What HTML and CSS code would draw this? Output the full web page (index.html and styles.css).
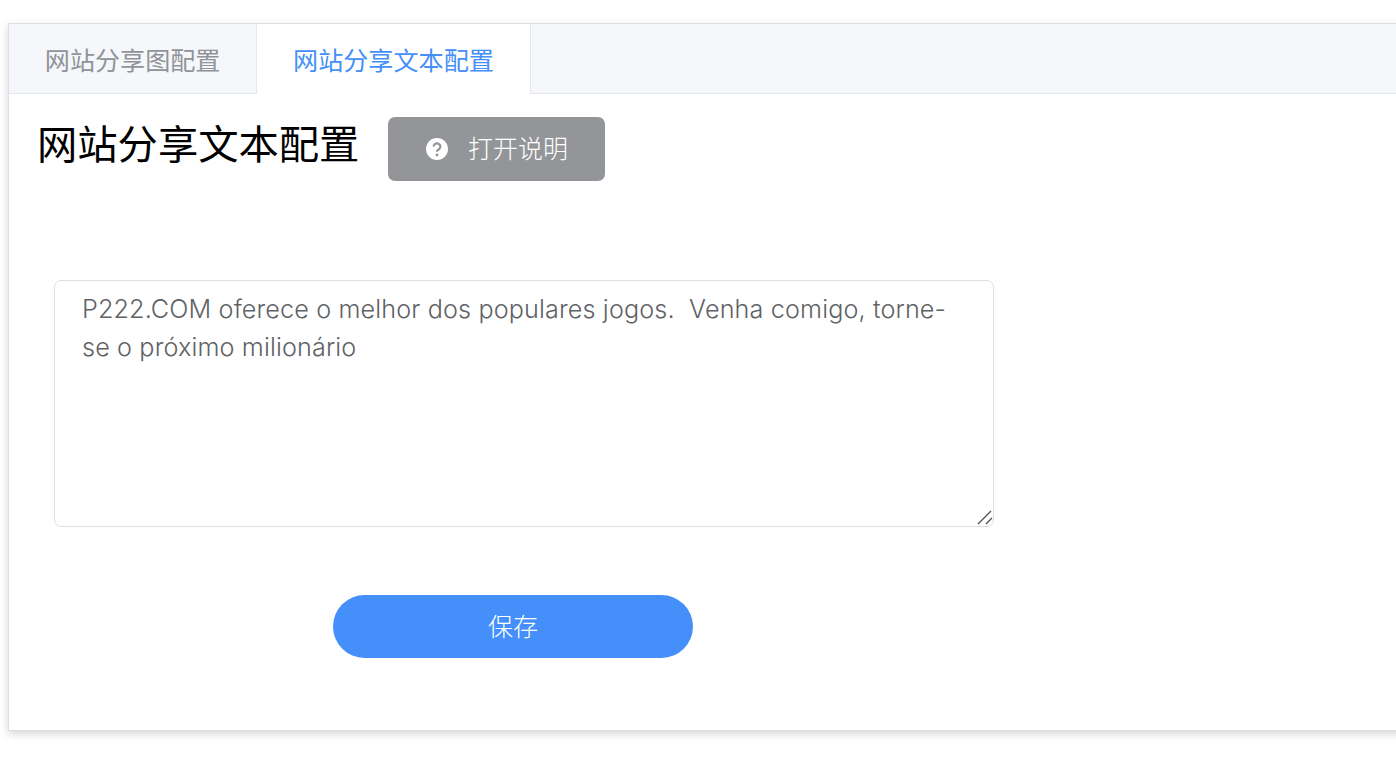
FILE: index.html
```html
<!DOCTYPE html>
<html>
<head>
    <title>网站分享配置</title>
    <link rel="stylesheet" href="styles.css">
</head>
<body>
    <div class="card">
        <div class="tabs">
            <div class="tab">网站分享图配置</div>
            <div class="tab active">网站分享文本配置</div>
        </div>

        <div class="heading">
            <h2>网站分享文本配置</h2>
            <button class="help-button">
                <svg class="help-icon" viewBox="0 0 22 22" width="22" height="22">
                    <circle cx="11" cy="11" r="11" fill="#fff"></circle>
                    <path d="M7.6 8.6a3.4 3.2 0 1 1 5.5 2.5c-1.2.9-2.1 1.3-2.1 2.7" fill="none" stroke="#939598" stroke-width="2.2"></path>
                    <circle cx="11" cy="17" r="1.4" fill="#939598"></circle>
                </svg>
                <span>打开说明</span>
            </button>
        </div>

        <div class="form">
            <div class="text-wrap">
                <textarea class="share-text" spellcheck="false">P222.COM oferece o melhor dos populares jogos.  Venha comigo, torne-se o próximo milionário</textarea>
                <svg class="grip" viewBox="0 0 16 16" width="16" height="16">
                    <path d="M1 14L14 1M9 14L15 8" stroke="#555" stroke-width="1.4" fill="none"></path>
                </svg>
            </div>
            <button class="save-button">保存</button>
        </div>
    </div>
</body>
</html>
```

FILE: styles.css
```css
html, body {
    overflow: hidden;
}

body {
    margin: 0;
    height: 772px;
    background-color: #fff;
    font-family: Inter, "Noto Sans CJK SC", sans-serif;
}

.card {
    box-sizing: border-box;
    height: 708px;
    margin: 23px -20px 0 8px;
    background-color: #fff;
    border: 1px solid #dcdfe6;
    box-shadow: 0 3px 8px rgba(0, 0, 0, 0.16);
}

.tabs {
    box-sizing: border-box;
    display: flex;
    height: 70px;
    background-color: #f5f7fa;
    border-bottom: 1px solid #e4e7ed;
}

.tab {
    padding: 0 35.8px;
    line-height: 74px;
    height: 69px;
    font-size: 25.1px;
    color: #909399;
    border-right: 1px solid #e4e7ed;
}

.tab.active {
    height: 70px;
    color: #448ff9;
    background-color: #fff;
}

.heading {
    display: flex;
    align-items: flex-start;
    gap: 28.6px;
    padding: 23px 0 0 28px;
}

.heading h2 {
    margin: 0;
    font-size: 40.3px;
    font-weight: 400;
    line-height: 56px;
    color: #000;
}

.help-button {
    box-sizing: border-box;
    display: flex;
    align-items: center;
    gap: 20px;
    width: 217px;
    height: 64px;
    padding: 0 0 4px 38px;
    border: none;
    border-radius: 7px;
    background-color: #939598;
    color: #fff;
    font-family: inherit;
    font-size: 25px;
    font-weight: 300;
}

.help-icon {
    margin-top: 4px;
}

.form {
    width: 940px;
    margin: 99px 0 0 45px;
}

.text-wrap {
    position: relative;
    height: 247px;
}

.share-text {
    display: block;
    box-sizing: border-box;
    width: 940px;
    height: 247px;
    padding: 9px 27px;
    border: 1px solid #dcdfe6;
    border-radius: 7px;
    color: #606266;
    font-family: inherit;
    font-size: 25.2px;
    font-weight: 300;
    letter-spacing: 0.13px;
    line-height: 38px;
    outline: none;
    resize: none;
}

.grip {
    position: absolute;
    right: 1px;
    bottom: 1px;
}

.save-button {
    box-sizing: border-box;
    display: block;
    width: 360px;
    height: 63px;
    margin: 68px 0 0 279px;
    padding: 0 0 4px;
    border: none;
    border-radius: 32px;
    background-color: #448ff9;
    color: #fff;
    font-family: inherit;
    font-size: 25px;
    font-weight: 300;
}
```
